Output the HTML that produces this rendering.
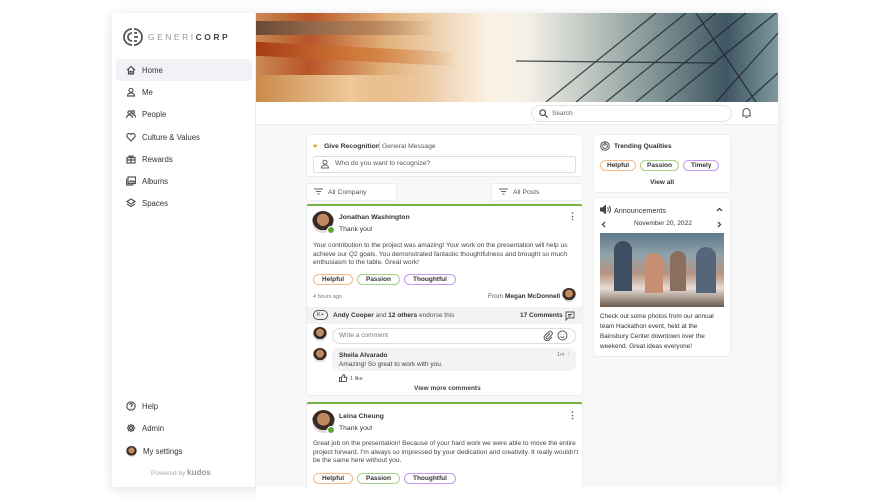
<!DOCTYPE html>
<html><head><meta charset="utf-8"><style>
*{box-sizing:border-box;margin:0;padding:0}
body{width:890px;height:500px;background:#fff;font-family:"Liberation Sans",sans-serif;color:#333;position:relative;overflow:hidden;font-size:7px}
.a{position:absolute}
#frame{left:112px;top:13px;width:666px;height:474px;background:#f8f8f9;box-shadow:0 2px 12px rgba(0,0,0,.12)}
#side{left:112px;top:13px;width:144px;height:474px;background:#fff;border-right:1px solid #eee}
.nav{position:absolute;left:4px;width:136px;height:22px;font-size:7.8px;color:#333;display:flex;align-items:center;padding-left:10px}
.nav svg{width:10px;height:10px;margin-right:6px;fill:none;stroke:#555;stroke-width:1.2}
.card{position:absolute;background:#fff;border:1px solid #ececec;border-radius:3px}
.pill{display:inline-block;height:11px;line-height:9px;border-radius:6px;font-size:6.5px;padding:0 8px;border:1px solid;color:#333;margin-right:4px;font-weight:bold}
.o{border-color:#f3b98a}.g{border-color:#a8cf85}.p{border-color:#c29bf0}
.t{position:absolute;white-space:nowrap}
.b{font-weight:bold}
.av{position:absolute;border-radius:50%;background:radial-gradient(circle at 50% 40%,#c08a60 0 35%,#3a2a22 36% 60%,#ddd 61%)}
</style></head><body>
<div id="frame" class="a"></div>
<div id="side" class="a">
 <svg class="a" style="left:11px;top:14px" width="20" height="20" viewBox="0 0 20 20" fill="none" stroke="#555" stroke-width="1.8"><path d="M9 2a8 8 0 0 0 0 16M11 2a8 8 0 0 1 0 16M9 6a4 4 0 0 0 0 8M11 6h3M11 14h3M11 10h4"/></svg>
 <div class="t" style="left:36px;top:19px;font-size:8.5px;letter-spacing:2.5px;color:#999">GENERI<b style="color:#444">CORP</b></div>
 <div class="nav" style="top:46px;background:#f1f2f5;border-radius:3px"><svg viewBox="0 0 10 10"><path d="M1 5L5 1.5 9 5M2.5 4v5h5V4M4 9V6.5h2V9"/></svg>Home</div>
 <div class="nav" style="top:68px"><svg viewBox="0 0 10 10"><circle cx="5" cy="3.3" r="2"/><path d="M1.5 9c0-2 1.6-3 3.5-3s3.5 1 3.5 3z"/></svg>Me</div>
 <div class="nav" style="top:90px"><svg viewBox="0 0 10 10"><circle cx="3.5" cy="3.5" r="1.6"/><circle cx="7" cy="3" r="1.4"/><path d="M.5 9c0-2 1.3-3 3-3s3 1 3 3M6.5 5.5c1.8 0 3 1 3 3"/></svg>People</div>
 <div class="nav" style="top:113px"><svg viewBox="0 0 10 10"><path d="M5 9L1.3 5.2A2.2 2.2 0 0 1 5 2.4a2.2 2.2 0 0 1 3.7 2.8z"/></svg>Culture &amp; Values</div>
 <div class="nav" style="top:135px"><svg viewBox="0 0 10 10"><rect x="1" y="3.5" width="8" height="5.5"/><path d="M1 6h8M5 3.5V9M5 3.5C4 1 2.5 1.5 3 3.5M5 3.5C6 1 7.5 1.5 7 3.5"/></svg>Rewards</div>
 <div class="nav" style="top:157px"><svg viewBox="0 0 10 10"><rect x="2" y="1" width="7.5" height="6.5"/><path d="M.5 2.5V9h7M3 6.5l2-2 1.5 1.5 1-1 1.5 1.5"/></svg>Albums</div>
 <div class="nav" style="top:179px"><svg viewBox="0 0 10 10"><path d="M5 1L9 3.5 5 6 1 3.5zM1 6l4 2.5L9 6"/></svg>Spaces</div>
 <div class="nav" style="top:382px"><svg viewBox="0 0 10 10"><circle cx="5" cy="5" r="4.2"/><path d="M3.7 3.8a1.3 1.3 0 1 1 1.8 1.2c-.5.2-.5.6-.5 1.1M5 7.3v.3"/></svg>Help</div>
 <div class="nav" style="top:404px"><svg viewBox="0 0 10 10"><circle cx="5" cy="5" r="1.5"/><path d="M5 .8v1.4M5 7.8v1.4M.8 5h1.4M7.8 5h1.4M2 2l1 1M7 7l1 1M2 8l1-1M7 3l1-1"/><circle cx="5" cy="5" r="3"/></svg>Admin</div>
 <div class="nav" style="top:427px"><span class="av" style="position:relative;width:11px;height:11px;margin-right:6px;display:inline-block"></span>My settings</div>
 <div class="t" style="left:39px;top:455px;font-size:6.5px;color:#aaa">Powered by <b style="font-size:8px;color:#999">kudos</b></div>
</div>
<!-- banner -->
<div class="a" style="left:256px;top:13px;width:522px;height:89px;background:linear-gradient(90deg,#c98a55 0%,#b85428 10%,#e2b27c 25%,#fbf3e6 45%,#f4f0e8 52%,#b9c2bd 65%,#6f8587 80%,#3f5663 90%,#7f989c 100%);overflow:hidden">
 <div class="a" style="left:0;top:8px;width:180px;height:14px;background:linear-gradient(90deg,#6a4a35,#a87a55,rgba(255,240,220,0))"></div>
 <div class="a" style="left:0;top:34px;width:200px;height:14px;background:linear-gradient(90deg,#a83c15,#d07a3a,rgba(255,240,220,0));transform:skewY(3deg)"></div>
 <div class="a" style="left:0;top:62px;width:190px;height:27px;background:linear-gradient(90deg,#c98a4a,#eec99a,rgba(255,255,255,0))"></div>
 <svg class="a" style="left:260px;top:0" width="262" height="89"><g stroke="#1d2430" stroke-width="1.3" opacity=".8"><path d="M30 89L140 0M60 89L170 0M90 89L200 0M120 89L230 0M150 89L260 0M200 89L262 20M0 48L200 50M180 0L240 89M230 89L262 60"/></g></svg>
</div>
<div class="a" style="left:256px;top:102px;width:522px;height:23px;background:#fff;border-bottom:1px solid #eee"></div>
<div class="a" style="left:531px;top:105px;width:201px;height:17px;border:1px solid #e3e3e3;border-radius:9px;background:#fff"></div>
<svg class="a" style="left:539px;top:109px" width="9" height="9" fill="none" stroke="#555" stroke-width="1.3"><circle cx="3.7" cy="3.7" r="2.8"/><path d="M5.8 5.8L8.5 8.5"/></svg>
<div class="t" style="left:552px;top:110px;font-size:6.5px;color:#666">Search</div>
<svg class="a" style="left:741px;top:107px" width="11" height="12" fill="none" stroke="#555" stroke-width="1.1"><path d="M2 9V5a3.5 3.5 0 0 1 7 0v4zM1 9h9M4.5 10.5h2M5.5 1v.5"/></svg>

<!-- give recognition -->
<div class="card" style="left:306px;top:134px;width:277px;height:43px"></div>
<div class="t" style="left:312px;top:142px;font-size:7px;color:#e5a323">★</div>
<div class="t b" style="left:324px;top:143px;font-size:6.8px">Give Recognition</div>
<div class="a" style="left:379px;top:141px;width:1px;height:10px;background:#ddd"></div>
<div class="t" style="left:382px;top:143px;font-size:6.8px;color:#555">General Message</div>
<div class="a" style="left:313px;top:156px;width:263px;height:17px;border:1px solid #ddd;border-radius:2px"></div>
<svg class="a" style="left:320px;top:159px" width="10" height="10" fill="none" stroke="#666" stroke-width="1"><circle cx="5" cy="3.3" r="2"/><path d="M1.5 9c0-2 1.6-3 3.5-3s3.5 1 3.5 3z"/></svg>
<div class="t" style="left:335px;top:160px;font-size:6.8px;color:#555">Who do you want to recognize?</div>
<!-- filters -->
<div class="card" style="left:306px;top:183px;width:91px;height:18px"></div>
<div class="card" style="left:491px;top:183px;width:92px;height:18px"></div>
<svg class="a" style="left:314px;top:188px" width="9" height="7" stroke="#666" stroke-width="1"><path d="M0 1h9M2 3.5h5M3.5 6h2"/></svg>
<div class="t" style="left:328px;top:189px;font-size:6.8px;color:#555">All Company</div>
<svg class="a" style="left:499px;top:188px" width="9" height="7" stroke="#666" stroke-width="1"><path d="M0 1h9M2 3.5h5M3.5 6h2"/></svg>
<div class="t" style="left:513px;top:189px;font-size:6.8px;color:#555">All Posts</div>

<!-- post 1 -->
<div class="card" style="left:306px;top:204px;width:277px;height:192px;border-top:2px solid #78b041"></div>
<div class="av" style="left:312px;top:211px;width:22px;height:22px"></div>
<div class="a" style="left:327px;top:226px;width:8px;height:8px;border-radius:50%;background:#5ea83a;border:1px solid #fff"></div>
<div class="t b" style="left:339px;top:214px;font-size:6.8px">Jonathan Washington</div>
<div class="t" style="left:339px;top:226px;font-size:6.8px">Thank you!</div>
<div class="t" style="left:568px;top:211px;font-size:9px;font-weight:bold;color:#555">⋮</div>
<div class="t" style="left:313px;top:242px;font-size:6.6px;line-height:8.6px;color:#444">Your contribution to the project was amazing! Your work on the presentation will help us<br>achieve our Q2 goals. You demonstrated fantastic thoughtfulness and brought so much<br>enthusiasm to the table. Great work!</div>
<div class="t" style="left:313px;top:274px"><span class="pill o">Helpful</span><span class="pill g">Passion</span><span class="pill p">Thoughtful</span></div>
<div class="t" style="left:313px;top:294px;font-size:5.5px;color:#777">4 hours ago</div>
<div class="t" style="left:488px;top:293px;font-size:6.5px;color:#555">From <b style="color:#333">Megan McDonnell</b></div>
<div class="av" style="left:562px;top:288px;width:14px;height:14px"></div>
<div class="a" style="left:307px;top:307px;width:275px;height:17px;background:#f3f3f5"></div>
<div class="t" style="left:313px;top:310px;width:15px;height:10px;border:1px solid #555;border-radius:6px;font-size:5.5px;text-align:center;line-height:8px">K+</div>
<div class="t" style="left:333px;top:312px;font-size:6.5px;color:#555"><b style="color:#333">Andy Cooper</b> and <b style="color:#333">12 others</b> endorse this</div>
<div class="t b" style="left:520px;top:312px;font-size:6.5px">17 Comments</div>
<svg class="a" style="left:565px;top:311px" width="10" height="10" fill="none" stroke="#555" stroke-width="1"><path d="M1 1h8v6H3L1 9z M3 3.5h4M3 5h3"/></svg>
<div class="av" style="left:313px;top:327px;width:14px;height:14px"></div>
<div class="a" style="left:332px;top:328px;width:244px;height:16px;border:1px solid #ddd;border-radius:8px;background:#fff"></div>
<div class="t" style="left:339px;top:332px;font-size:6.5px;color:#777">Write a comment</div>
<svg class="a" style="left:543px;top:330px" width="10" height="11" fill="none" stroke="#555" stroke-width="1"><path d="M7 3L3.5 7a1.2 1.2 0 0 0 1.7 1.7L9 4.5A2.2 2.2 0 0 0 6 1.5L2 5.5a3 3 0 0 0 4.3 4.3L9 7"/></svg>
<svg class="a" style="left:557px;top:330px" width="11" height="11" fill="none" stroke="#555" stroke-width="1"><circle cx="5.5" cy="5.5" r="4.5"/><path d="M3.5 6.5c1 1.3 3 1.3 4 0M4 4v.5M7 4v.5"/></svg>
<div class="av" style="left:313px;top:348px;width:14px;height:14px"></div>
<div class="a" style="left:332px;top:348px;width:244px;height:23px;border-radius:7px;background:#f3f3f5"></div>
<div class="t b" style="left:339px;top:352px;font-size:6.5px">Sheila Alvarado</div>
<div class="t" style="left:339px;top:361px;font-size:6.5px;color:#444">Amazing! So great to work with you.</div>
<div class="t" style="left:557px;top:352px;font-size:5.5px;color:#777">1m ⋮</div>
<svg class="a" style="left:339px;top:374px" width="9" height="8" fill="none" stroke="#555" stroke-width="1"><path d="M.5 3.5h2v4h-2zM2.5 3.5L4.5.5c1 0 1.2.8 1 1.6L5.2 3.2H8l-.8 4.3H2.5"/></svg>
<div class="t" style="left:350px;top:376px;font-size:5.5px;color:#555">1 like</div>
<div class="t b" style="left:414px;top:385px;font-size:6.5px;color:#444">View more comments</div>

<!-- post 2 -->
<div class="card" style="left:306px;top:402px;width:277px;height:90px;border-top:2px solid #78b041"></div>
<div class="av" style="left:312px;top:410px;width:23px;height:23px"></div>
<div class="a" style="left:327px;top:426px;width:8px;height:8px;border-radius:50%;background:#5ea83a;border:1px solid #fff"></div>
<div class="t b" style="left:339px;top:413px;font-size:6.8px">Leina Cheung</div>
<div class="t" style="left:339px;top:425px;font-size:6.8px">Thank you!</div>
<div class="t" style="left:568px;top:410px;font-size:9px;font-weight:bold;color:#555">⋮</div>
<div class="t" style="left:313px;top:440px;font-size:6.6px;line-height:8.6px;color:#444">Great job on the presentation! Because of your hard work we were able to move the entire<br>project forward. I'm always so impressed by your dedication and creativity. It really wouldn't<br>be the same here without you.</div>
<div class="t" style="left:313px;top:473px"><span class="pill o">Helpful</span><span class="pill g">Passion</span><span class="pill p">Thoughtful</span></div>
<div class="a" style="left:256px;top:487px;width:522px;height:13px;background:#fff"></div>

<!-- trending -->
<div class="card" style="left:593px;top:134px;width:138px;height:59px"></div>
<svg class="a" style="left:600px;top:141px" width="10" height="10" fill="none" stroke="#555" stroke-width="1"><circle cx="5" cy="5" r="4.3"/><circle cx="5" cy="5" r="2.4"/><path d="M5 5V.7"/></svg>
<div class="t b" style="left:614px;top:143px;font-size:6.6px">Trending Qualities</div>
<div class="t" style="left:600px;top:160px"><span class="pill o" style="padding:0 6px">Helpful</span><span class="pill g" style="padding:0 6px">Passion</span><span class="pill p" style="padding:0 7px">Timely</span></div>
<div class="t b" style="left:650px;top:179px;font-size:6.6px">View all</div>
<!-- announcements -->
<div class="card" style="left:593px;top:197px;width:138px;height:160px"></div>
<svg class="a" style="left:600px;top:205px" width="11" height="9" fill="#444" stroke="#444" stroke-width="1"><path d="M0 3h2.5L5.5.5v8L2.5 6H0z"/><path d="M7.5 2.5a3 3 0 0 1 0 4M9 1a5 5 0 0 1 0 7" fill="none"/></svg>
<div class="t" style="left:614px;top:206px;font-size:7.2px">Announcements</div>
<svg class="a" style="left:716px;top:207px" width="7" height="5" fill="none" stroke="#333" stroke-width="1.2"><path d="M1 4l2.5-2.5L6 4"/></svg>
<svg class="a" style="left:601px;top:221px" width="5" height="7" fill="none" stroke="#333" stroke-width="1.2"><path d="M4 1L1.5 3.5 4 6"/></svg>
<div class="t" style="left:634px;top:220px;font-size:6.6px">November 20, 2022</div>
<svg class="a" style="left:717px;top:221px" width="5" height="7" fill="none" stroke="#333" stroke-width="1.2"><path d="M1 1l2.5 2.5L1 6"/></svg>
<div class="a" style="left:600px;top:233px;width:124px;height:74px;background:linear-gradient(180deg,#5f7a88 0%,#8fa3ab 30%,#b89380 55%,#e6ddd4 75%,#6c5a4d 100%)">
 <div class="a" style="left:14px;top:8px;width:18px;height:50px;border-radius:9px 9px 0 0;background:#3f4f62"></div>
 <div class="a" style="left:45px;top:20px;width:18px;height:40px;border-radius:9px 9px 0 0;background:#c88e72"></div>
 <div class="a" style="left:70px;top:18px;width:16px;height:40px;border-radius:8px 8px 0 0;background:#8a6f5e"></div>
 <div class="a" style="left:96px;top:14px;width:20px;height:46px;border-radius:10px 10px 0 0;background:#546678"></div>
</div>
<div class="t" style="left:600px;top:312px;font-size:6.4px;line-height:10px;color:#333">Check out some photos from our annual<br>team Hackathon event, held at the<br>Bainsbury Center downtown over the<br>weekend. Great ideas everyone!</div>
</body></html>
